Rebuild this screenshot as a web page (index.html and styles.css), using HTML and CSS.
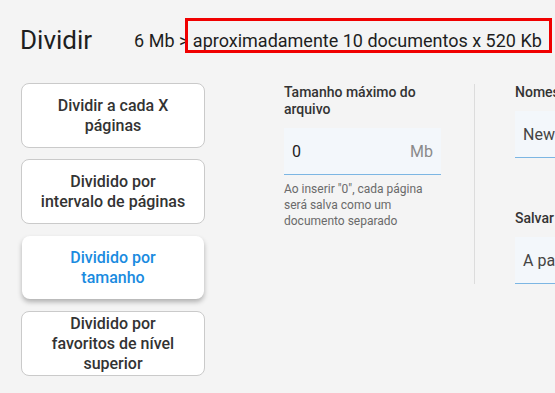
FILE: index.html
```html
<!DOCTYPE html>
<html lang="pt">
<head>
<meta charset="utf-8">
<title>Dividir</title>
<link rel="stylesheet" href="styles.css">
</head>
<body>
<div class="page">
  <header class="top">
    <h1 class="title">Dividir</h1>
    <p class="summary">6 Mb &gt; <span class="hl">aproximadamente 10 documentos x 520 Kb</span></p>
  </header>
  <main class="content">
    <nav class="modes">
      <button class="mode">Dividir a cada X páginas</button>
      <button class="mode">Dividido por intervalo de páginas</button>
      <button class="mode active">Dividido por tamanho</button>
      <button class="mode">Dividido por favoritos de nível superior</button>
    </nav>
    <section class="col field-col">
      <div class="label">Tamanho máximo do arquivo</div>
      <div class="input">
        <span class="value">0</span>
        <span class="unit">Mb</span>
      </div>
      <p class="help">Ao inserir "0", cada página será salva como um documento separado</p>
    </section>
    <section class="col side-col">
      <div class="label">Nomes de arquivo</div>
      <div class="input wide"><span class="value soft">New Document</span></div>
      <div class="label second">Salvar em</div>
      <div class="input wide"><span class="value soft">A pasta de origem</span></div>
    </section>
  </main>
</div>
</body>
</html>
```
FILE: styles.css
```css
html, body {
  margin: 0;
  padding: 0;
  overflow: hidden;
  background: #f4f4f4;
}
body {
  font-family: Roboto, "Liberation Sans", sans-serif;
  color: #222;
  width: 555px;
  height: 393px;
}
.page {
  padding-left: 21px;
}
.top {
  display: flex;
  align-items: center;
  height: 28px;
  padding-top: 26px;
}
.title {
  margin: 0 0 0 -1px;
  font-size: 26px;
  font-weight: 400;
  line-height: 28px;
  color: #1e1e1e;
  white-space: nowrap;
}
.summary {
  margin: 0 0 0 42px;
  font-size: 18px;
  color: #1e1e1e;
  white-space: nowrap;
}
.hl {
  position: relative;
}
.hl::after {
  content: "";
  position: absolute;
  left: -8px;
  right: -10px;
  top: -12px;
  bottom: -2px;
  border: 3px solid #f00000;
}
.content {
  display: flex;
  align-items: flex-start;
  margin-top: 29px;
}
.modes {
  display: flex;
  flex-direction: column;
  gap: 11px;
  width: 184px;
  flex: none;
}
.mode {
  box-sizing: border-box;
  height: 65px;
  padding: 0 18px;
  background: #fff;
  border: 1px solid #cacaca;
  border-radius: 8px;
  font-family: inherit;
  font-size: 16px;
  font-weight: 500;
  line-height: 20px;
  color: #333;
  text-align: center;
}
.mode.active {
  height: 63px;
  margin: 1px;
  padding: 0 17px;
  border: none;
  color: #1a8be0;
  box-shadow: 0 3px 5px rgba(0, 0, 0, 0.28);
}
.col {
  margin-top: 1px;
}
.field-col {
  margin-left: 79px;
  width: 157px;
  flex: none;
}
.side-col {
  margin-left: 33px;
  padding-left: 40px;
  border-left: 1px solid #dcdcdc;
  width: 220px;
  flex: none;
}
.label {
  font-size: 14px;
  font-weight: 500;
  line-height: 17px;
  color: #333;
}
.side-col .label {
  white-space: nowrap;
}
.label.second {
  margin-top: 52px;
}
.input {
  box-sizing: border-box;
  height: 47px;
  margin-top: 10px;
  display: flex;
  align-items: center;
  justify-content: space-between;
  padding: 0 8px;
  background: #f3f7fb;
  border-bottom: 1px solid #7cb6e3;
  font-size: 16px;
}
.value {
  color: #222;
}
.value.soft {
  color: #444;
  white-space: nowrap;
}
.unit {
  color: #8a8a8a;
}
.help {
  margin: 6px 0 0;
  font-size: 12px;
  line-height: 16px;
  color: #6a6a6a;
}
```
